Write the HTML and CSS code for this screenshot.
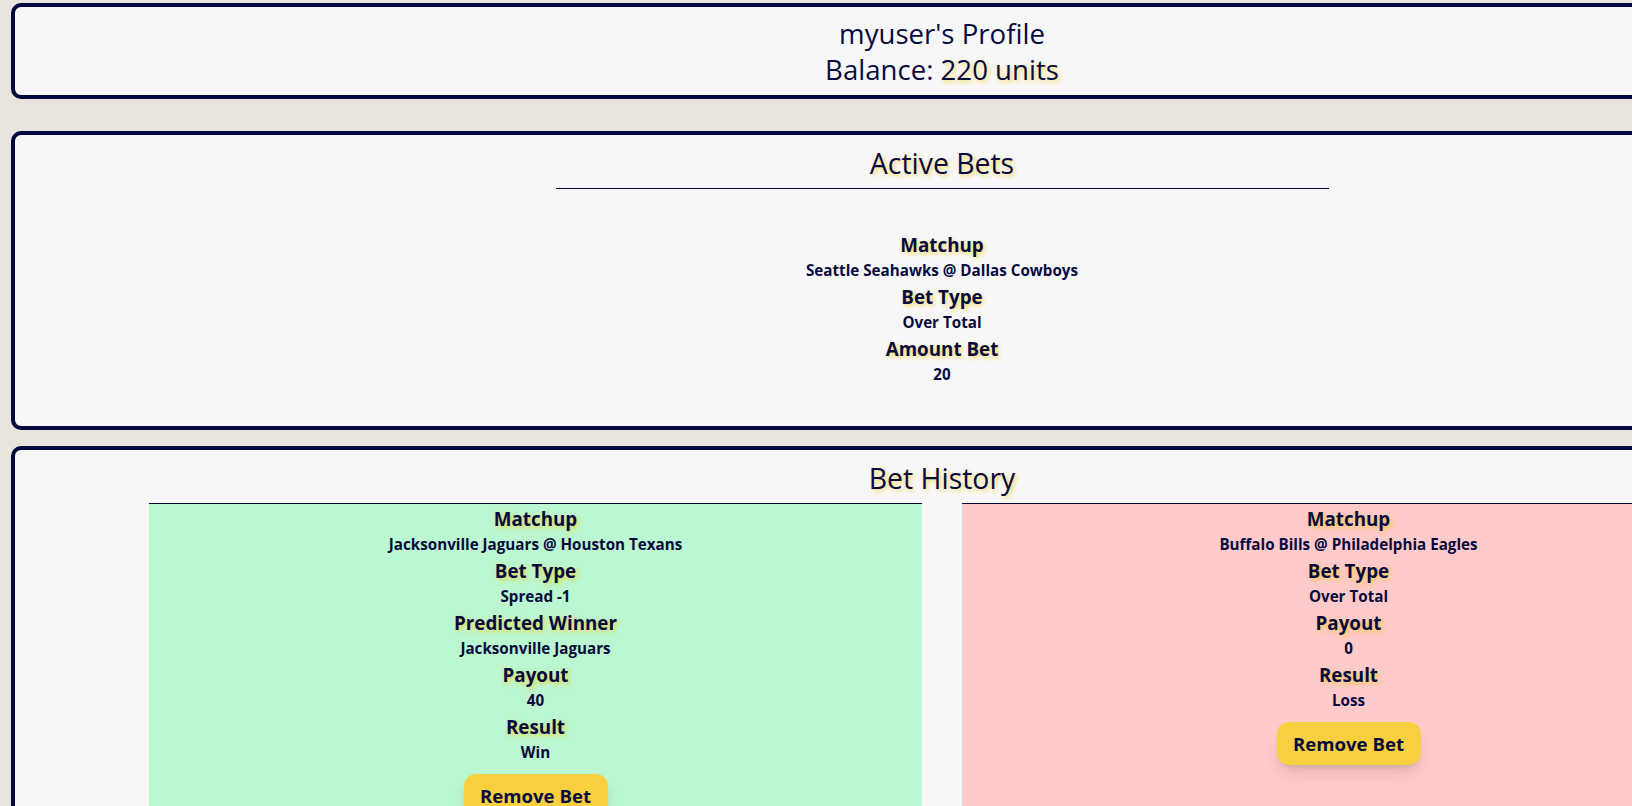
FILE: index.html
```html
<!DOCTYPE html>
<html lang="en">
<head>
<meta charset="utf-8">
<title>Profile</title>
<link rel="stylesheet" href="styles.css">
</head>
<body>
<div class="page">
  <section class="panel profile">
    <div class="profile-name">myuser's Profile</div>
    <div class="profile-balance">Balance: <span class="glow">220 units</span></div>
  </section>

  <div class="bets">
    <section class="panel">
      <h2 class="panel-title">Active Bets</h2>
      <div class="cards">
        <div class="card card-active">
          <div class="field"><div class="label">Matchup</div><div class="value">Seattle Seahawks @ Dallas Cowboys</div></div>
          <div class="field"><div class="label">Bet Type</div><div class="value">Over Total</div></div>
          <div class="field"><div class="label">Amount Bet</div><div class="value">20</div></div>
        </div>
      </div>
    </section>

    <section class="panel">
      <h2 class="panel-title">Bet History</h2>
      <div class="cards">
        <div class="card card-win">
          <div class="field"><div class="label">Matchup</div><div class="value">Jacksonville Jaguars @ Houston Texans</div></div>
          <div class="field"><div class="label">Bet Type</div><div class="value">Spread -1</div></div>
          <div class="field"><div class="label">Predicted Winner</div><div class="value">Jacksonville Jaguars</div></div>
          <div class="field"><div class="label">Payout</div><div class="value">40</div></div>
          <div class="field"><div class="label">Result</div><div class="value">Win</div></div>
          <button class="btn" type="button">Remove Bet</button>
        </div>
        <div class="card card-loss">
          <div class="field"><div class="label">Matchup</div><div class="value">Buffalo Bills @ Philadelphia Eagles</div></div>
          <div class="field"><div class="label">Bet Type</div><div class="value">Over Total</div></div>
          <div class="field"><div class="label">Payout</div><div class="value">0</div></div>
          <div class="field"><div class="label">Result</div><div class="value">Loss</div></div>
          <button class="btn" type="button">Remove Bet</button>
        </div>
      </div>
    </section>
  </div>
</div>
</body>
</html>
```

FILE: styles.css
```css
html, body {
  margin: 0;
  padding: 0;
}
body {
  background: #e9e4dd;
  color: #070b3e;
  font-family: "Open Sans", "Noto Sans", sans-serif;
  overflow: hidden;
}
.page {
  width: 1862px;
  padding: 3px 0 0 11px;
  display: flex;
  flex-direction: column;
  gap: 32px;
}
.bets {
  display: flex;
  flex-direction: column;
  gap: 16px;
}
.panel {
  background: #f7f7f7;
  border: 4px solid #050a3e;
  border-radius: 10px;
  padding: 8px 0 8px;
  text-align: center;
}
.profile-name,
.profile-balance {
  font-size: 27.6px;
  line-height: 36px;
}
.glow,
.panel-title,
.label {
  text-shadow: 2px 2px 4px rgba(250, 204, 21, 0.7);
}
.panel-title {
  margin: 0 0 5px;
  font-size: 28.4px;
  font-weight: 400;
  line-height: 40px;
}
.cards {
  display: flex;
  justify-content: center;
  gap: 40px;
}
.card {
  width: 773px;
  border-top: 1px solid #050a3e;
  padding-top: 2px;
  display: flex;
  flex-direction: column;
  align-items: center;
  gap: 2px;
}
.card-active {
  padding: 43px 0 32px;
}
.card-win {
  background: #bbf7d0;
}
.card-loss {
  background: #fecaca;
}
.field {
  display: flex;
  flex-direction: column;
  align-items: center;
}
.label {
  font-size: 18.8px;
  font-weight: 700;
  line-height: 27px;
}
.value {
  font-size: 15.2px;
  font-weight: 700;
  line-height: 23px;
}
.btn {
  margin-top: 8px;
  width: 144px;
  height: 43px;
  border: none;
  border-radius: 12px;
  background: #f8cf3e;
  color: #070b3e;
  font-family: inherit;
  font-size: 18.6px;
  font-weight: 700;
  box-shadow: 0 10px 15px -3px rgba(0, 0, 0, 0.12), 0 4px 6px -4px rgba(0, 0, 0, 0.12);
  cursor: pointer;
}
```
